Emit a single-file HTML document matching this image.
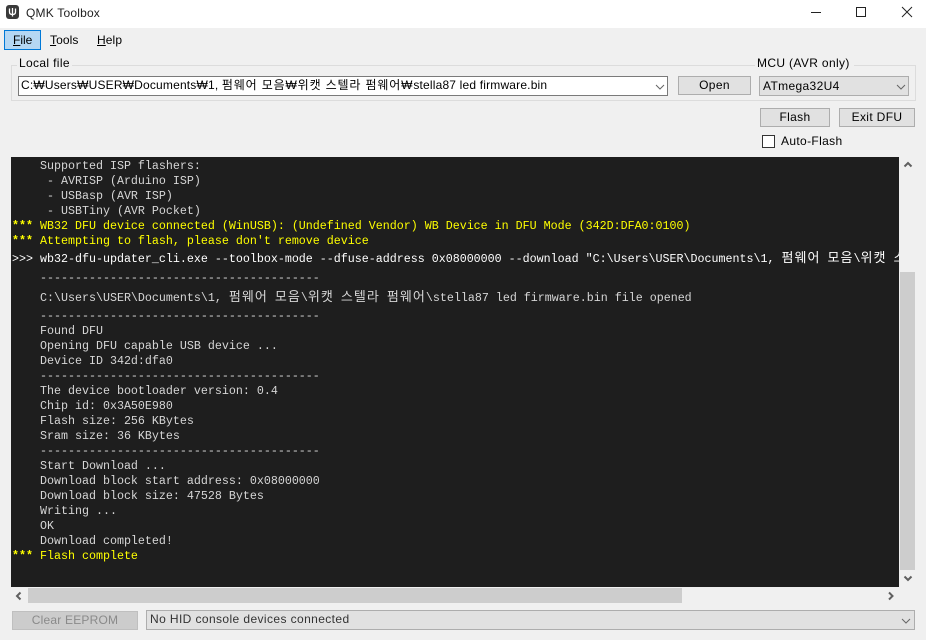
<!DOCTYPE html>
<html><head><meta charset="utf-8"><style>
html,body{margin:0;padding:0;width:926px;height:640px;overflow:hidden;background:#f0f0f0}
body{position:relative;font-family:"Liberation Sans","Noto Sans CJK KR",sans-serif;font-size:12px;color:#000}
.a{position:absolute;box-sizing:border-box;white-space:nowrap}
.t{line-height:16px;height:16px;letter-spacing:.35px}
.btn{background:#e1e1e1;border:1px solid #adadad;text-align:center;line-height:16px;letter-spacing:.35px}
.l{position:absolute;left:40px;height:15px;line-height:15px;white-space:pre;font-family:"Liberation Mono","Noto Sans CJK KR",monospace;font-size:11.67px;color:#d6d6d6}
.p{position:absolute;left:12px;height:15px;line-height:15px;font-family:"Liberation Mono",monospace;font-size:11.67px;font-weight:bold;color:#ffff00}
.y{color:#ffff00}.w{color:#fff}
.k{font-family:"Noto Sans CJK KR",sans-serif;font-size:13px;letter-spacing:1.04px}
svg{position:absolute;overflow:visible}
</style></head><body>
<div class="a" style="left:0;top:0;width:926px;height:28px;background:#fff"></div>
<div class="a" style="left:6px;top:5px;width:13px;height:14px;background:#3a3a3a;border-radius:3px"></div>
<svg style="left:6px;top:5px" width="13" height="14"><path d="M3.500 3.500v3.500q0 2.500 3 2.500t3-2.500v-3.500M6.500 3v8.500" fill="none" stroke="#fff" stroke-width="1.300"/></svg>
<div class="a t" style="left:26px;top:5px;color:#222;letter-spacing:.2px">QMK Toolbox</div>
<svg style="left:811px;top:7px" width="100" height="12"><path d="M0 5.500h10" stroke="#222"/><path d="M45.500 .5h9v9h-9z" fill="none" stroke="#222"/><path d="M91 0l10 10M101 0l-10 10" stroke="#222" fill="none"/></svg>

<div class="a" style="left:4px;top:30px;width:37px;height:20px;background:#b5d7f3;border:1px solid #0078d7"></div>
<div class="a t" style="left:13px;top:32px;letter-spacing:0"><u>F</u>ile</div>
<div class="a t" style="left:50px;top:32px;letter-spacing:.1px"><u>T</u>ools</div>
<div class="a t" style="left:97px;top:32px;letter-spacing:.1px"><u>H</u>elp</div>

<div class="a" style="left:11px;top:65px;width:905px;height:36px;border:1px solid #dcdcdc"></div>
<div class="a t" style="left:17px;top:55px;background:#f0f0f0;padding:0 2px;">Local file</div>
<div class="a" style="left:18px;top:76px;width:650px;height:20px;background:#fff;border:1px solid #7a7a7a"></div>
<div class="a t" style="left:21px;top:77px;letter-spacing:.18px">C:₩Users₩USER₩Documents₩1, <span style="letter-spacing:.85px">펌웨어 모음₩위캣 스텔라 펌웨어₩</span>stella87 led firmware.bin</div>
<svg style="left:655px;top:84px" width="10" height="6"><path d="M1 1l4 4 4-4" fill="none" stroke="#666"/></svg>
<div class="a btn" style="left:678px;top:76px;width:73px;height:19px">Open</div>

<div class="a t" style="left:755px;top:55px;background:#f0f0f0;padding:0 2px;width:99px">MCU (AVR only)</div>
<div class="a" style="left:759px;top:76px;width:150px;height:20px;background:#e1e1e1;border:1px solid #adadad"></div>
<div class="a t" style="left:763px;top:78px">ATmega32U4</div>
<svg style="left:896px;top:84px" width="10" height="6"><path d="M1 1l4 4 4-4" fill="none" stroke="#666"/></svg>

<div class="a btn" style="left:760px;top:108px;width:70px;height:19px">Flash</div>
<div class="a btn" style="left:839px;top:108px;width:76px;height:19px">Exit DFU</div>
<div class="a" style="left:762px;top:135px;width:13px;height:13px;background:#fff;border:1px solid #333"></div>
<div class="a t" style="left:781px;top:133px">Auto-Flash</div>

<div class="a" style="left:11px;top:157px;width:888px;height:430px;background:#1e1e1e;overflow:hidden">
<div style="position:absolute;left:-11px;top:-157px;width:926px;height:640px">
<div class="l" style="top:159px">Supported ISP flashers:</div>
<div class="l" style="top:174px"> - AVRISP (Arduino ISP)</div>
<div class="l" style="top:189px"> - USBasp (AVR ISP)</div>
<div class="l" style="top:204px"> - USBTiny (AVR Pocket)</div>
<div class="p" style="top:219px">***</div>
<div class="l y" style="top:219px">WB32 DFU device connected (WinUSB): (Undefined Vendor) WB Device in DFU Mode (342D:DFA0:0100)</div>
<div class="p" style="top:234px">***</div>
<div class="l y" style="top:234px">Attempting to flash, please don't remove device</div>
<div class="p w" style="top:252px;font-weight:normal">&gt;&gt;&gt;</div>
<div class="l w" style="top:249px">wb32-dfu-updater_cli.exe --toolbox-mode --dfuse-address 0x08000000 --download "C:\Users\USER\Documents\1, <span class="k">펌웨어</span> <span class="k">모음</span>\<span class="k">위캣</span> <span class="k">스</span></div>
<div class="l" style="top:271px">----------------------------------------</div>
<div class="l" style="top:288px">C:\Users\USER\Documents\1, <span class="k">펌웨어</span> <span class="k">모음</span>\<span class="k">위캣</span> <span class="k">스텔라</span> <span class="k">펌웨어</span>\stella87 led firmware.bin file opened</div>
<div class="l" style="top:309px">----------------------------------------</div>
<div class="l" style="top:324px">Found DFU</div>
<div class="l" style="top:339px">Opening DFU capable USB device ...</div>
<div class="l" style="top:354px">Device ID 342d:dfa0</div>
<div class="l" style="top:369px">----------------------------------------</div>
<div class="l" style="top:384px">The device bootloader version: 0.4</div>
<div class="l" style="top:399px">Chip id: 0x3A50E980</div>
<div class="l" style="top:414px">Flash size: 256 KBytes</div>
<div class="l" style="top:429px">Sram size: 36 KBytes</div>
<div class="l" style="top:444px">----------------------------------------</div>
<div class="l" style="top:459px">Start Download ...</div>
<div class="l" style="top:474px">Download block start address: 0x08000000</div>
<div class="l" style="top:489px">Download block size: 47528 Bytes</div>
<div class="l" style="top:504px">Writing ...</div>
<div class="l" style="top:519px">OK</div>
<div class="l" style="top:534px">Download completed!</div>
<div class="p" style="top:549px">***</div>
<div class="l y" style="top:549px">Flash complete</div>
</div></div>

<div class="a" style="left:900px;top:272px;width:15px;height:298px;background:#cdcdcd"></div>
<svg style="left:903px;top:161px" width="10" height="7"><path d="M1.500 5.500l3.500-3.500 3.500 3.500" fill="none" stroke="#606060" stroke-width="2"/></svg>
<svg style="left:903px;top:575px" width="10" height="7"><path d="M1.500 1.500l3.500 3.500 3.500-3.500" fill="none" stroke="#606060" stroke-width="2"/></svg>
<div class="a" style="left:28px;top:588px;width:654px;height:15px;background:#cdcdcd"></div>
<svg style="left:15px;top:591px" width="8" height="10"><path d="M5.500 1.500l-3.500 3.500 3.500 3.500" fill="none" stroke="#606060" stroke-width="2"/></svg>
<svg style="left:887px;top:591px" width="8" height="10"><path d="M2 1.500l3.500 3.500-3.500 3.500" fill="none" stroke="#606060" stroke-width="2"/></svg>

<div class="a btn" style="left:12px;top:611px;width:126px;height:19px;background:#ccc;border-color:#bfbfbf;color:#8a8a8a;letter-spacing:.2px">Clear EEPROM</div>
<div class="a" style="left:146px;top:610px;width:769px;height:20px;background:#e1e1e1;border:1px solid #adadad"></div>
<div class="a t" style="left:150px;top:611px;color:#333;letter-spacing:.4px">No HID console devices connected</div>
<svg style="left:901px;top:618px" width="10" height="6"><path d="M1 1l4 4 4-4" fill="none" stroke="#666"/></svg>
</body></html>
